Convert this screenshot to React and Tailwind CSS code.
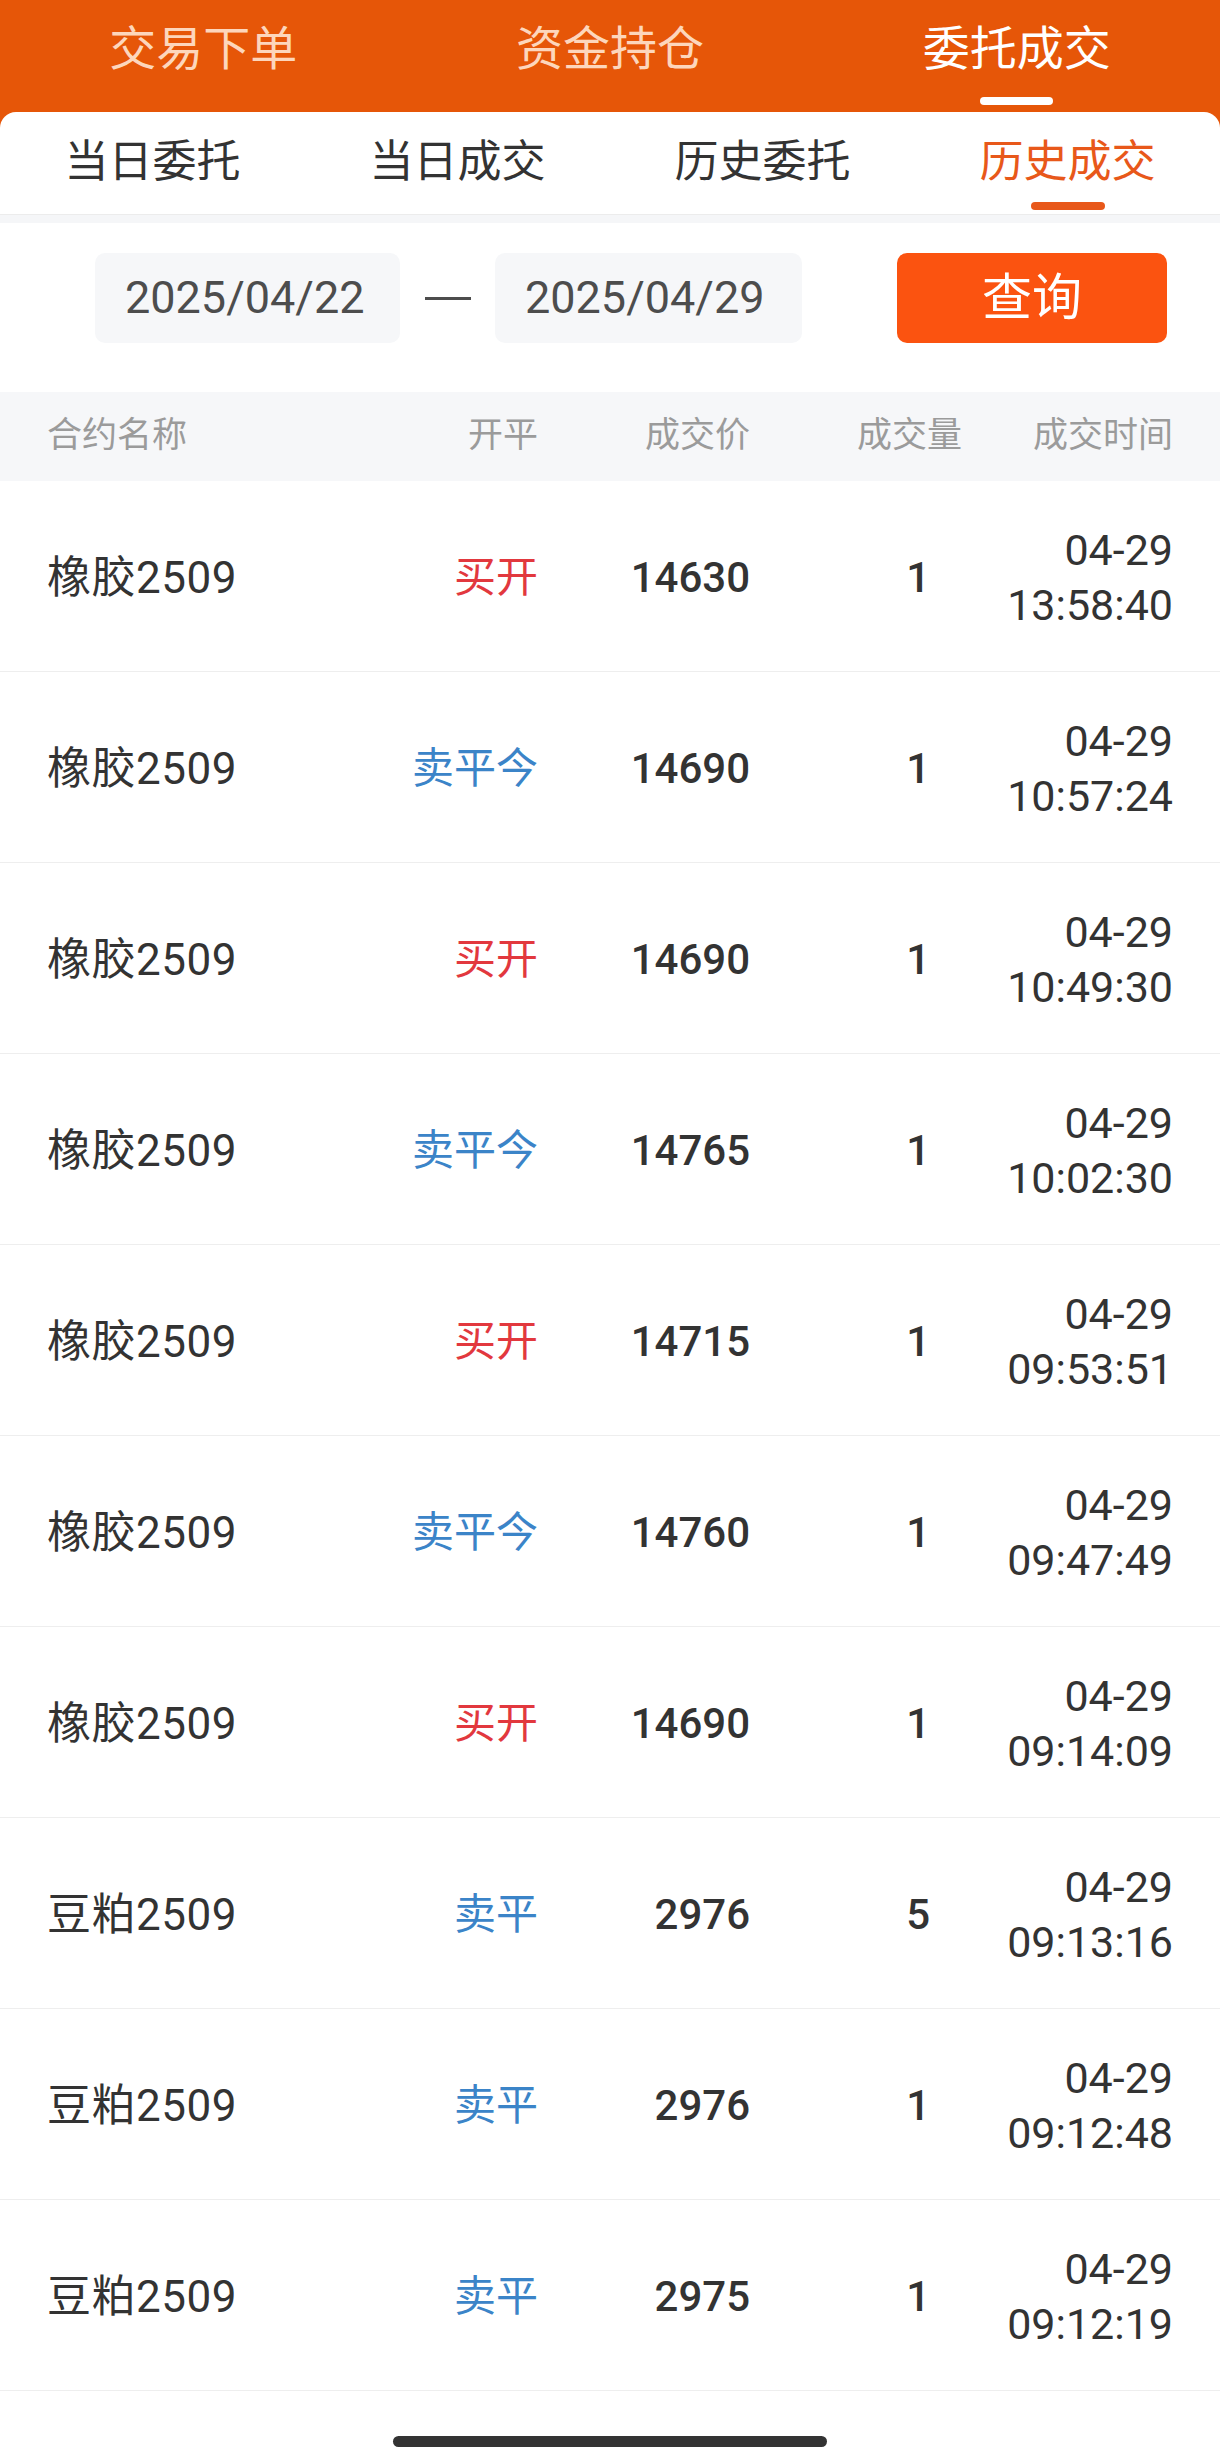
import React from "react";

const topTabs = ["交易下单", "资金持仓", "委托成交"];
const subTabs = ["当日委托", "当日成交", "历史委托", "历史成交"];

const trades = [
  { name: "橡胶2509", side: "买开", price: "14630", qty: "1", time: "13:58:40" },
  { name: "橡胶2509", side: "卖平今", price: "14690", qty: "1", time: "10:57:24" },
  { name: "橡胶2509", side: "买开", price: "14690", qty: "1", time: "10:49:30" },
  { name: "橡胶2509", side: "卖平今", price: "14765", qty: "1", time: "10:02:30" },
  { name: "橡胶2509", side: "买开", price: "14715", qty: "1", time: "09:53:51" },
  { name: "橡胶2509", side: "卖平今", price: "14760", qty: "1", time: "09:47:49" },
  { name: "橡胶2509", side: "买开", price: "14690", qty: "1", time: "09:14:09" },
  { name: "豆粕2509", side: "卖平", price: "2976", qty: "5", time: "09:13:16" },
  { name: "豆粕2509", side: "卖平", price: "2976", qty: "1", time: "09:12:48" },
  { name: "豆粕2509", side: "卖平", price: "2975", qty: "1", time: "09:12:19" },
];

const App = () => {
  return (
    <div className="w-[1220px] min-h-[2464px] bg-white text-[#333333] font-['Roboto','Noto_Sans_CJK_SC',sans-serif]">
      {/* orange header with the white sub-tab card */}
      <div className="bg-[#e65608]">
        <div className="grid grid-cols-3 h-[112px]">
          {topTabs.map((t, i) => (
            <div key={t} className="flex flex-col items-center pt-[20px]">
              <span
                className={
                  i === 2
                    ? "text-[47px] leading-[58px] text-white"
                    : "text-[47px] leading-[58px] text-[#fdd6bc]"
                }
              >
                {t}
              </span>
              {i === 2 && <div className="mt-[19px] w-[73px] h-[8px] rounded-full bg-white" />}
            </div>
          ))}
        </div>
        <div className="grid grid-cols-4 h-[103px] bg-white rounded-t-[16px] border-b border-[#ececec]">
          {subTabs.map((t, i) => (
            <div key={t} className="flex flex-col items-center pt-[20px]">
              <span
                className={
                  i === 3
                    ? "text-[44px] leading-[60px] text-[#e8581a]"
                    : "text-[44px] leading-[60px] text-[#333333]"
                }
              >
                {t}
              </span>
              {i === 3 && <div className="mt-[10px] w-[74px] h-[8px] rounded-full bg-[#e8581a]" />}
            </div>
          ))}
        </div>
      </div>
      <div className="h-[8px] bg-[#f5f6f8]" />

      {/* date range */}
      <div className="flex items-center pl-[95px] pt-[30px] pb-[49px]">
        <div className="w-[305px] h-[90px] rounded-[10px] bg-[#f6f7f9] flex items-center pl-[30px] text-[45px] text-[#4d4d4d]">
          2025/04/22
        </div>
        <div className="w-[95px] flex justify-center">
          <div className="w-[46px] h-[3px] bg-[#4d4d4d]" />
        </div>
        <div className="w-[307px] h-[90px] rounded-[10px] bg-[#f6f7f9] flex items-center pl-[30px] text-[45px] text-[#4d4d4d]">
          2025/04/29
        </div>
        <button className="ml-[95px] w-[270px] h-[90px] rounded-[10px] bg-[#fb5310] text-white text-[50px] leading-none">
          查询
        </button>
      </div>

      {/* table header */}
      <div className="flex items-center h-[89px] px-[47px] bg-[#f6f7f9] text-[35px] text-[#9b9b9b]">
        <div className="w-[300px]">合约名称</div>
        <div className="w-[191px] text-right">开平</div>
        <div className="w-[212px] text-right">成交价</div>
        <div className="w-[212px] text-right">成交量</div>
        <div className="flex-1 text-right">成交时间</div>
      </div>

      {/* rows */}
      {trades.map((r, i) => (
        <div key={i} className="flex items-center h-[191px] px-[47px] pt-[3px] border-b border-[#eeeeee]">
          <div className="w-[300px] text-[44px] tracking-[0.5px]">{r.name}</div>
          <div
            className={
              r.side === "买开"
                ? "w-[191px] text-right text-[42px] text-[#e2383e]"
                : "w-[191px] text-right text-[42px] text-[#3b84c8]"
            }
          >
            {r.side}
          </div>
          <div className="w-[212px] text-right text-[42px] font-medium">{r.price}</div>
          <div className="w-[180px] text-right text-[42px] font-medium">{r.qty}</div>
          <div className="flex-1 text-right text-[43px] leading-[55px]">
            <div>04-29</div>
            <div>{r.time}</div>
          </div>
        </div>
      ))}

      <div className="pt-[45px] flex justify-center">
        <div className="w-[434px] h-[11px] rounded-full bg-[#333333]" />
      </div>
    </div>
  );
};

export default App;
